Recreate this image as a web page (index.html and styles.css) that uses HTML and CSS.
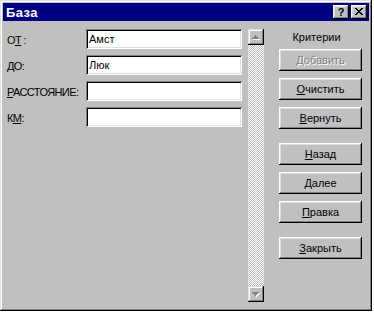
FILE: index.html
```html
<!DOCTYPE html>
<html lang="ru">
<head>
<meta charset="utf-8">
<title>База</title>
<link rel="stylesheet" href="styles.css">
</head>
<body>
<div class="window">
  <div class="titlebar">
    <span class="title">База</span>
    <div class="tb-buttons">
      <div class="tb-btn help">?</div>
      <div class="tb-btn close">
        <svg width="8" height="7" viewBox="0 0 8 7" shape-rendering="crispEdges">
          <path fill="#000" d="M0 0h2v1H0zM6 0h2v1H6zM1 1h2v1H1zM5 1h2v1H5zM2 2h4v1H2zM3 3h2v1H3zM2 4h4v1H2zM1 5h2v1H1zM5 5h2v1H5zM0 6h2v1H0zM6 6h2v1H6z"/>
        </svg>
      </div>
    </div>
  </div>
  <div class="content">
    <div class="fields">
      <div class="label"><span>О<u>Т</u> :</span></div>
      <div class="edit">Амст</div>
      <div class="label"><span>ДО:</span></div>
      <div class="edit">Люк</div>
      <div class="label"><span><u>Р</u>АССТОЯНИЕ:</span></div>
      <div class="edit"></div>
      <div class="label"><span>К<u>М</u>:</span></div>
      <div class="edit"></div>
    </div>
    <div class="scrollbar">
      <div class="sb-btn">
        <svg width="8" height="5" viewBox="0 0 8 5" shape-rendering="crispEdges">
          <path fill="#fff" d="M4 1h1v1H4zM3 2h3v1H3zM2 3h5v1H2zM1 4h7v1H1z"/>
          <path fill="#808080" d="M3 0h1v1H3zM2 1h3v1H2zM1 2h5v1H1zM0 3h7v1H0z"/>
        </svg>
      </div>
      <div class="sb-track"></div>
      <div class="sb-btn">
        <svg width="8" height="5" viewBox="0 0 8 5" shape-rendering="crispEdges">
          <path fill="#fff" d="M1 1h7v1H1zM2 2h5v1H2zM3 3h3v1H3zM4 4h1v1H4z"/>
          <path fill="#808080" d="M0 0h7v1H0zM1 1h5v1H1zM2 2h3v1H2zM3 3h1v1H3z"/>
        </svg>
      </div>
    </div>
    <div class="actions">
      <div class="caption">Критерии</div>
      <div class="group">
        <div class="btn disabled">Добавить</div>
        <div class="btn"><u>О</u>чистить</div>
        <div class="btn"><u>В</u>ернуть</div>
      </div>
      <div class="group">
        <div class="btn"><u>Н</u>азад</div>
        <div class="btn"><u>Д</u>алее</div>
        <div class="btn"><u>П</u>равка</div>
      </div>
      <div class="group">
        <div class="btn"><u>З</u>акрыть</div>
      </div>
    </div>
  </div>
</div>
</body>
</html>
```

FILE: styles.css
```css
* { box-sizing: border-box; }
html, body { margin: 0; padding: 0; }
body {
  width: 374px;
  height: 315px;
  overflow: hidden;
  background: #fff;
  font-family: "Liberation Sans", Arial, sans-serif;
  font-size: 11px;
  color: #000;
}
.window {
  width: 372px;
  height: 311px;
  background: #c0c0c0;
  padding: 3px;
  display: flex;
  flex-direction: column;
  box-shadow: inset -1px -1px #000, inset 1px 1px #dfdfdf, inset -2px -2px #808080, inset 2px 2px #fff;
}
.titlebar {
  height: 18px;
  flex: none;
  background: #000080;
  display: flex;
  align-items: center;
  justify-content: space-between;
  padding: 0 2px 0 2px;
}
.title {
  color: #fff;
  font-weight: bold;
  font-size: 13px;
  letter-spacing: 0.4px;
  padding-left: 1px;
}
.tb-buttons { display: flex; gap: 2px; }
.tb-btn {
  width: 16px;
  height: 14px;
  background: #c0c0c0;
  display: flex;
  align-items: center;
  justify-content: center;
  box-shadow: inset -1px -1px #000, inset 1px 1px #fff, inset -2px -2px #808080, inset 2px 2px #dfdfdf;
}
.tb-btn.help {
  font-weight: bold;
  font-size: 11px;
  line-height: 14px;
  padding-bottom: 1px;
}
.tb-btn svg { display: block; margin-top: -1px; }
.content {
  flex: 1;
  display: flex;
  padding: 8px 0 6px 4px;
}
.fields {
  display: grid;
  grid-template-columns: 79px 156px;
  grid-auto-rows: 20px;
  row-gap: 6px;
  align-self: flex-start;
}
.label {
  display: flex;
  align-items: center;
  padding-top: 2px;
  white-space: pre;
  letter-spacing: -0.6px;
}
.edit {
  background: #fff;
  padding: 0 3px 0 3px;
  line-height: 20px;
  box-shadow: inset 1px 1px #808080, inset -1px -1px #fff, inset 2px 2px #000, inset -2px -2px #dfdfdf;
}
.scrollbar {
  width: 16px;
  margin-left: 6px;
  display: flex;
  flex-direction: column;
  background-color: #c0c0c0;
  background-image: conic-gradient(#fff 25%, #c0c0c0 0 50%, #fff 0 75%, #c0c0c0 0);
  background-size: 2px 2px;
}
.sb-btn {
  width: 16px;
  height: 16px;
  background: #c0c0c0;
  display: flex;
  align-items: center;
  justify-content: center;
  box-shadow: inset -1px -1px #000, inset 1px 1px #dfdfdf, inset -2px -2px #808080, inset 2px 2px #fff;
}
.sb-btn svg { display: block; }
.sb-track { flex: 1; }
.actions {
  width: 83px;
  margin-left: 15px;
  display: flex;
  flex-direction: column;
  gap: 14px;
}
.caption {
  height: 20px;
  line-height: 16px;
  text-align: center;
  padding-right: 8px;
  margin-bottom: -14px;
}
.group {
  display: flex;
  flex-direction: column;
  gap: 7px;
}
.btn {
  height: 22px;
  line-height: 22px;
  text-align: center;
  background: #c0c0c0;
  box-shadow: inset -1px -1px #000, inset 1px 1px #fff, inset -2px -2px #808080, inset 2px 2px #dfdfdf;
}
.btn.disabled {
  color: #808080;
  text-shadow: 1px 1px 0 #fff;
}
u { text-decoration: underline; text-underline-offset: 1px; }
```
